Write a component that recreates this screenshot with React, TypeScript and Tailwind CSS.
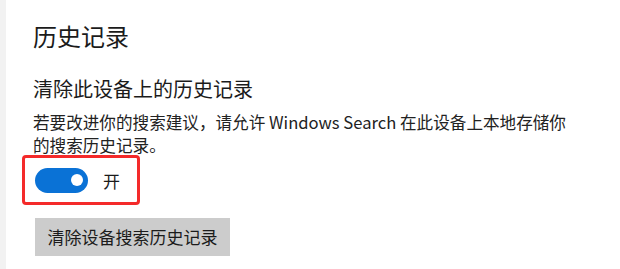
// 设置页：历史记录区块（开关被红框标出）
const font = { fontFamily: '"Noto Sans CJK SC", "Noto Sans", sans-serif' };

export default function App() {
  return (
    <div className="flex h-[269px] w-[620px] bg-white text-[#1b1b1b]" style={font}>
      <div className="w-[6px] shrink-0 bg-[#f2f2f2]" />
      <div className="flex flex-col pl-[27px] pt-[20px]">
        <h1 className="text-[24px] leading-[32px] font-normal">历史记录</h1>

        <h2 className="mt-[23px] text-[20px] leading-[28px] font-normal">
          清除此设备上的历史记录
        </h2>
        <p className="mt-[8px] w-[540px] text-[16.6px] leading-[23px] text-[#222]">
          若要改进你的搜索建议，请允许 Windows Search 在此设备上本地存储你的搜索历史记录。
        </p>

        <div className="ml-[-11px] mt-[-2px] flex h-[50px] w-[118px] items-center rounded-[4px] border-[3px] border-[#f42a2a] pl-[10px]">
          <div className="flex h-[25px] w-[53px] items-center justify-end rounded-full bg-[#0a72d6] pr-[5px]">
            <div className="h-[12px] w-[12px] rounded-full bg-white" />
          </div>
          <span className="ml-[15px] text-[17px] leading-none">开</span>
        </div>

        <button className="ml-[2px] mt-[13px] h-[38px] w-[195px] bg-[#cccccc] text-[17px] text-[#1b1b1b]">
          清除设备搜索历史记录
        </button>
      </div>
    </div>
  );
}
